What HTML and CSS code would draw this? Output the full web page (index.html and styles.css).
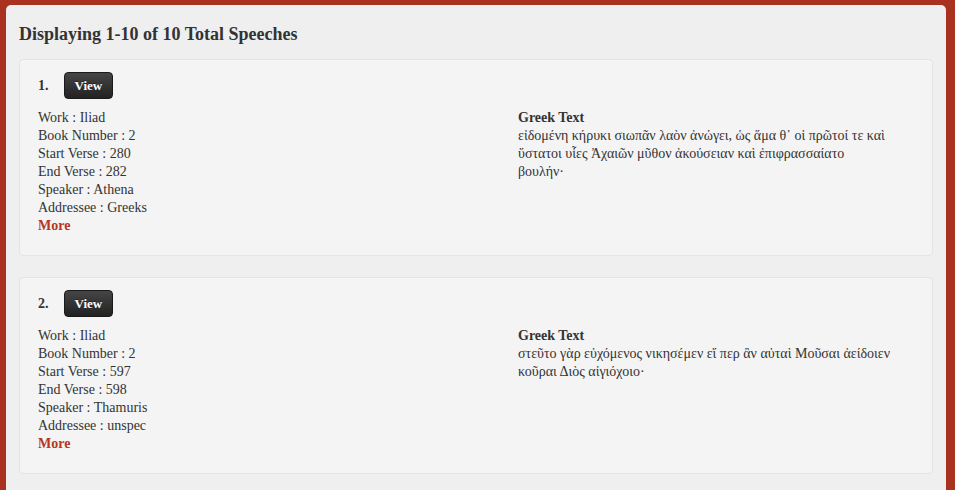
FILE: index.html
```
<!DOCTYPE html>
<html>
<head>
<meta charset="utf-8">
<link rel="stylesheet" href="styles.css">
</head>
<body>
<div class="panel">
  <h2 class="title">Displaying 1-10 of 10 Total Speeches</h2>
  <div class="card">
    <div class="card-head"><span class="num">1.</span><a class="btn">View</a></div>
    <div class="cols">
      <div class="meta">
        <div>Work : Iliad</div>
        <div>Book Number : 2</div>
        <div>Start Verse : 280</div>
        <div>End Verse : 282</div>
        <div>Speaker : Athena</div>
        <div>Addressee : Greeks</div>
        <a class="more">More</a>
      </div>
      <div class="greek">
        <div class="greek-title">Greek Text</div>
        <div class="greek-body">εἰδομένη κήρυκι σιωπᾶν λαὸν ἀνώγει, ὡς ἅμα θ᾽ οἱ πρῶτοί τε καὶ ὕστατοι υἷες Ἀχαιῶν μῦθον ἀκούσειαν καὶ ἐπιφρασσαίατο βουλήν·</div>
      </div>
    </div>
  </div>
  <div class="card">
    <div class="card-head"><span class="num">2.</span><a class="btn">View</a></div>
    <div class="cols">
      <div class="meta">
        <div>Work : Iliad</div>
        <div>Book Number : 2</div>
        <div>Start Verse : 597</div>
        <div>End Verse : 598</div>
        <div>Speaker : Thamuris</div>
        <div>Addressee : unspec</div>
        <a class="more">More</a>
      </div>
      <div class="greek">
        <div class="greek-title">Greek Text</div>
        <div class="greek-body">στεῦτο γὰρ εὐχόμενος νικησέμεν εἴ περ ἂν αὐταὶ Μοῦσαι ἀείδοιεν κοῦραι Διὸς αἰγιόχοιο·</div>
      </div>
    </div>
  </div>
</div>
</body>
</html>
```
FILE: styles.css
```
html, body {
  margin: 0;
  padding: 0;
  height: 100%;
  overflow: hidden;
}
body {
  background: #a9311f;
  font-family: "Liberation Serif", "Times New Roman", serif;
  color: #333;
  font-size: 14px;
  line-height: 18px;
}
.panel {
  margin: 5px 0 0 6px;
  width: 914px;
  padding: 13px 13px 20px 13px;
  background: #efefef;
  border-radius: 5px;
  min-height: 600px;
}
.title {
  margin: 0;
  font-size: 18px;
  line-height: 32px;
  font-weight: bold;
  color: #333;
}
.card {
  margin-top: 9px;
  margin-bottom: 21px;
  background: #f4f4f4;
  border: 1px solid #e4e4e4;
  border-radius: 4px;
  padding: 12px 18px 20px 18px;
}
.card-head {
  display: flex;
  align-items: center;
  height: 27px;
  margin-bottom: 10px;
}
.num {
  font-weight: bold;
  width: 26px;
}
.btn {
  display: inline-block;
  height: 25px;
  line-height: 25px;
  padding: 0 9.5px;
  border: 1px solid #1a1a1a;
  border-radius: 4px;
  background: linear-gradient(#454545, #222);
  color: #fff;
  font-weight: bold;
  font-size: 13px;
  text-shadow: 0 -1px 0 rgba(0,0,0,0.4);
}
.cols {
  display: grid;
  grid-template-columns: 480px 1fr;
}
.greek-body {
  max-width: 374px;
}
.more {
  color: #b93520;
  font-weight: bold;
}
.greek-title {
  font-weight: bold;
}
```
